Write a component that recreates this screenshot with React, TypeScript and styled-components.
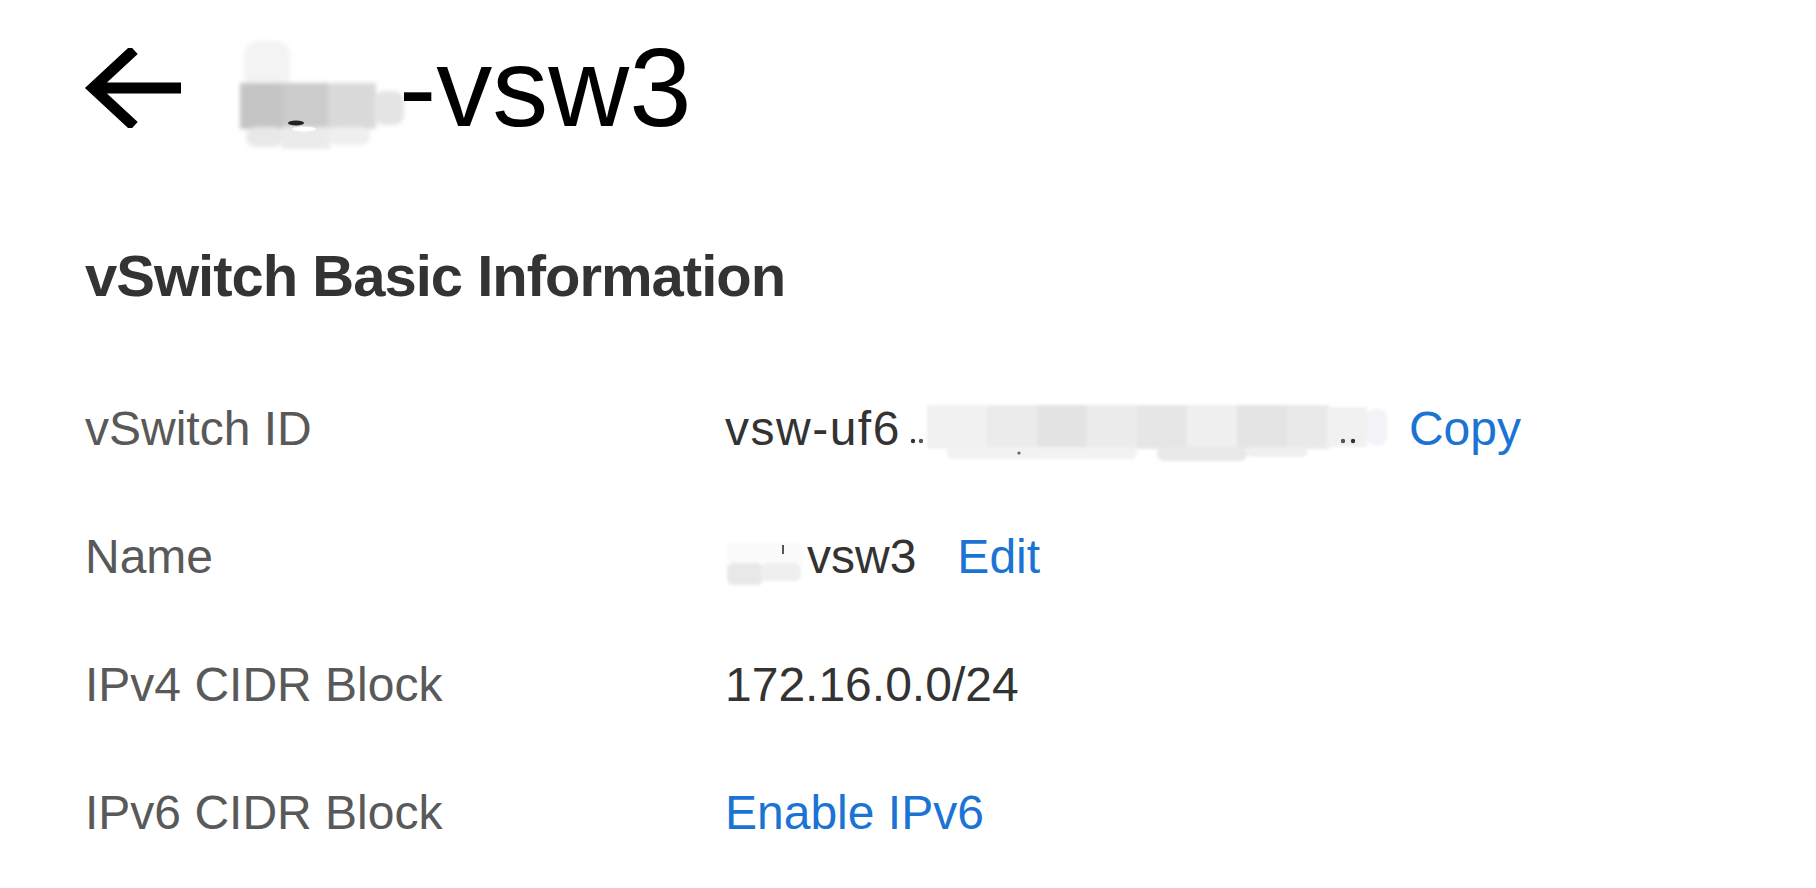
import React from 'react';
import styled, { createGlobalStyle } from 'styled-components';

const GlobalStyle = createGlobalStyle`
  html, body {
    margin: 0;
    padding: 0;
    background: #ffffff;
  }
  body {
    font-family: "Liberation Sans", Arial, sans-serif;
    -webkit-font-smoothing: antialiased;
  }
`;

const Page = styled.div`
  width: 1816px;
  height: 888px;
  padding: 0 85px;
  box-sizing: border-box;
  overflow: hidden;
`;

const Header = styled.div`
  display: flex;
  align-items: center;
  height: 176px;
`;

const BackButton = styled.button`
  display: flex;
  align-items: center;
  padding: 0;
  margin: 0 52px 0 -1px;
  border: none;
  background: none;
  cursor: pointer;
`;

const Title = styled.h1`
  display: flex;
  align-items: center;
  margin: 0;
  font-size: 112px;
  font-weight: 400;
  line-height: 1;
  color: #000000;
`;

const TitleText = styled.span`
  position: relative;
  margin-left: -12px;
`;

const SectionTitle = styled.h2`
  margin: 0;
  padding: 64px 0 52px;
  font-size: 58px;
  line-height: 72px;
  font-weight: 700;
  letter-spacing: -1px;
  color: #333333;
`;

const InfoList = styled.div`
  display: flex;
  flex-direction: column;
`;

const Row = styled.div`
  display: grid;
  grid-template-columns: 640px 1fr;
  align-items: center;
  height: 128px;
  font-size: 48px;
`;

const Label = styled.div`
  color: #595959;
`;

const Value = styled.div`
  display: flex;
  align-items: center;
  color: #333333;
`;

const IdText = styled.span`
  letter-spacing: 1.5px;
`;

const Link = styled.a<{ $gap?: number }>`
  margin-left: ${(p) => p.$gap ?? 0}px;
  color: #1b74d4;
  text-decoration: none;
  cursor: pointer;
`;

const Masked = styled.svg<{ $offset?: number; $left?: number }>`
  display: block;
  flex: none;
  margin-top: ${(p) => p.$offset ?? 0}px;
  margin-left: ${(p) => p.$left ?? 0}px;
`;

const BackArrow = () => (
  <svg width="100" height="80" viewBox="0 0 100 80" fill="none">
    <path
      d="M97 40H10M50 2L9 40L50 78"
      stroke="#000"
      strokeWidth="11"
      strokeLinejoin="miter"
      strokeLinecap="butt"
    />
  </svg>
);

const TitleMask = () => (
  <Masked width="175" height="112" viewBox="0 0 175 112" $offset={14}>
    <defs>
      <filter id="tm" x="-10%" y="-10%" width="120%" height="120%">
        <feGaussianBlur stdDeviation="2" />
      </filter>
    </defs>
    <g filter="url(#tm)">
      <rect x="8" y="2" width="46" height="50" rx="14" fill="#f3f3f3" />
      <rect x="4" y="44" width="44" height="46" fill="#c5c5c5" />
      <rect x="46" y="44" width="48" height="46" fill="#cbcbcb" />
      <rect x="92" y="44" width="48" height="46" fill="#d9d9d9" />
      <rect x="138" y="52" width="30" height="34" rx="10" fill="#e4e4e4" />
      <rect x="10" y="88" width="38" height="20" rx="10" fill="#e8e8e8" />
      <rect x="46" y="88" width="48" height="22" fill="#ebebeb" />
      <rect x="92" y="88" width="42" height="18" rx="8" fill="#efefef" />
    </g>
    <ellipse cx="60" cy="84" rx="8" ry="2.5" fill="#222" />
    <ellipse cx="68" cy="90" rx="12" ry="2.5" fill="#ffffff" />
  </Masked>
);

const IdMask = () => (
  <Masked width="484" height="62" viewBox="0 0 484 62" $offset={12} $left={6}>
    <defs>
      <filter id="im" x="-5%" y="-20%" width="110%" height="140%">
        <feGaussianBlur stdDeviation="1.5" />
      </filter>
    </defs>
    <g filter="url(#im)">
      <rect x="20" y="2" width="60" height="44" fill="#f1f1f1" />
      <rect x="80" y="2" width="50" height="44" fill="#ebebeb" />
      <rect x="130" y="2" width="50" height="44" fill="#e3e3e3" />
      <rect x="180" y="2" width="50" height="44" fill="#ececec" />
      <rect x="230" y="2" width="50" height="44" fill="#e6e6e6" />
      <rect x="280" y="2" width="50" height="44" fill="#f0f0f0" />
      <rect x="330" y="2" width="50" height="44" fill="#e4e4e4" />
      <rect x="380" y="2" width="42" height="44" fill="#e9e9e9" />
      <rect x="420" y="4" width="40" height="40" fill="#f1f1f1" />
      <rect x="460" y="6" width="20" height="36" rx="8" fill="#f2f3f8" />
      <rect x="40" y="44" width="190" height="12" rx="6" fill="#f2f2f2" />
      <rect x="250" y="44" width="90" height="14" rx="7" fill="#e8e8e8" />
      <rect x="340" y="44" width="60" height="10" rx="5" fill="#efefef" />
    </g>
    <circle cx="6" cy="38" r="2.2" fill="#333" />
    <circle cx="14" cy="38" r="2.2" fill="#555" />
    <circle cx="112" cy="50" r="1.6" fill="#666" />
    <circle cx="436" cy="38" r="2.2" fill="#555" />
    <circle cx="446" cy="38" r="2.2" fill="#333" />
  </Masked>
);

const NameMask = () => (
  <Masked width="82" height="50" viewBox="0 0 82 50" $offset={20}>
    <defs>
      <filter id="nm" x="-10%" y="-10%" width="120%" height="120%">
        <feGaussianBlur stdDeviation="1.5" />
      </filter>
    </defs>
    <g filter="url(#nm)">
      <rect x="2" y="2" width="76" height="20" fill="#fafafa" />
      <rect x="2" y="22" width="36" height="22" rx="6" fill="#e8e8e8" />
      <rect x="36" y="22" width="40" height="18" rx="6" fill="#efefef" />
    </g>
    <rect x="57" y="4" width="2" height="9" fill="#555" />
  </Masked>
);

const App: React.FC = () => {
  return (
    <>
      <GlobalStyle />
      <Page>
        <Header>
          <BackButton aria-label="Back">
            <BackArrow />
          </BackButton>
          <Title>
            <TitleMask />
            <TitleText>-vsw3</TitleText>
          </Title>
        </Header>

        <SectionTitle>vSwitch Basic Information</SectionTitle>

        <InfoList>
          <Row>
            <Label>vSwitch ID</Label>
            <Value>
              <IdText>vsw-uf6</IdText>
              <IdMask />
              <Link $gap={18}>Copy</Link>
            </Value>
          </Row>
          <Row>
            <Label>Name</Label>
            <Value>
              <NameMask />
              <span>vsw3</span>
              <Link $gap={41}>Edit</Link>
            </Value>
          </Row>
          <Row>
            <Label>IPv4 CIDR Block</Label>
            <Value>172.16.0.0/24</Value>
          </Row>
          <Row>
            <Label>IPv6 CIDR Block</Label>
            <Value>
              <Link>Enable IPv6</Link>
            </Value>
          </Row>
        </InfoList>
      </Page>
    </>
  );
};

export default App;
